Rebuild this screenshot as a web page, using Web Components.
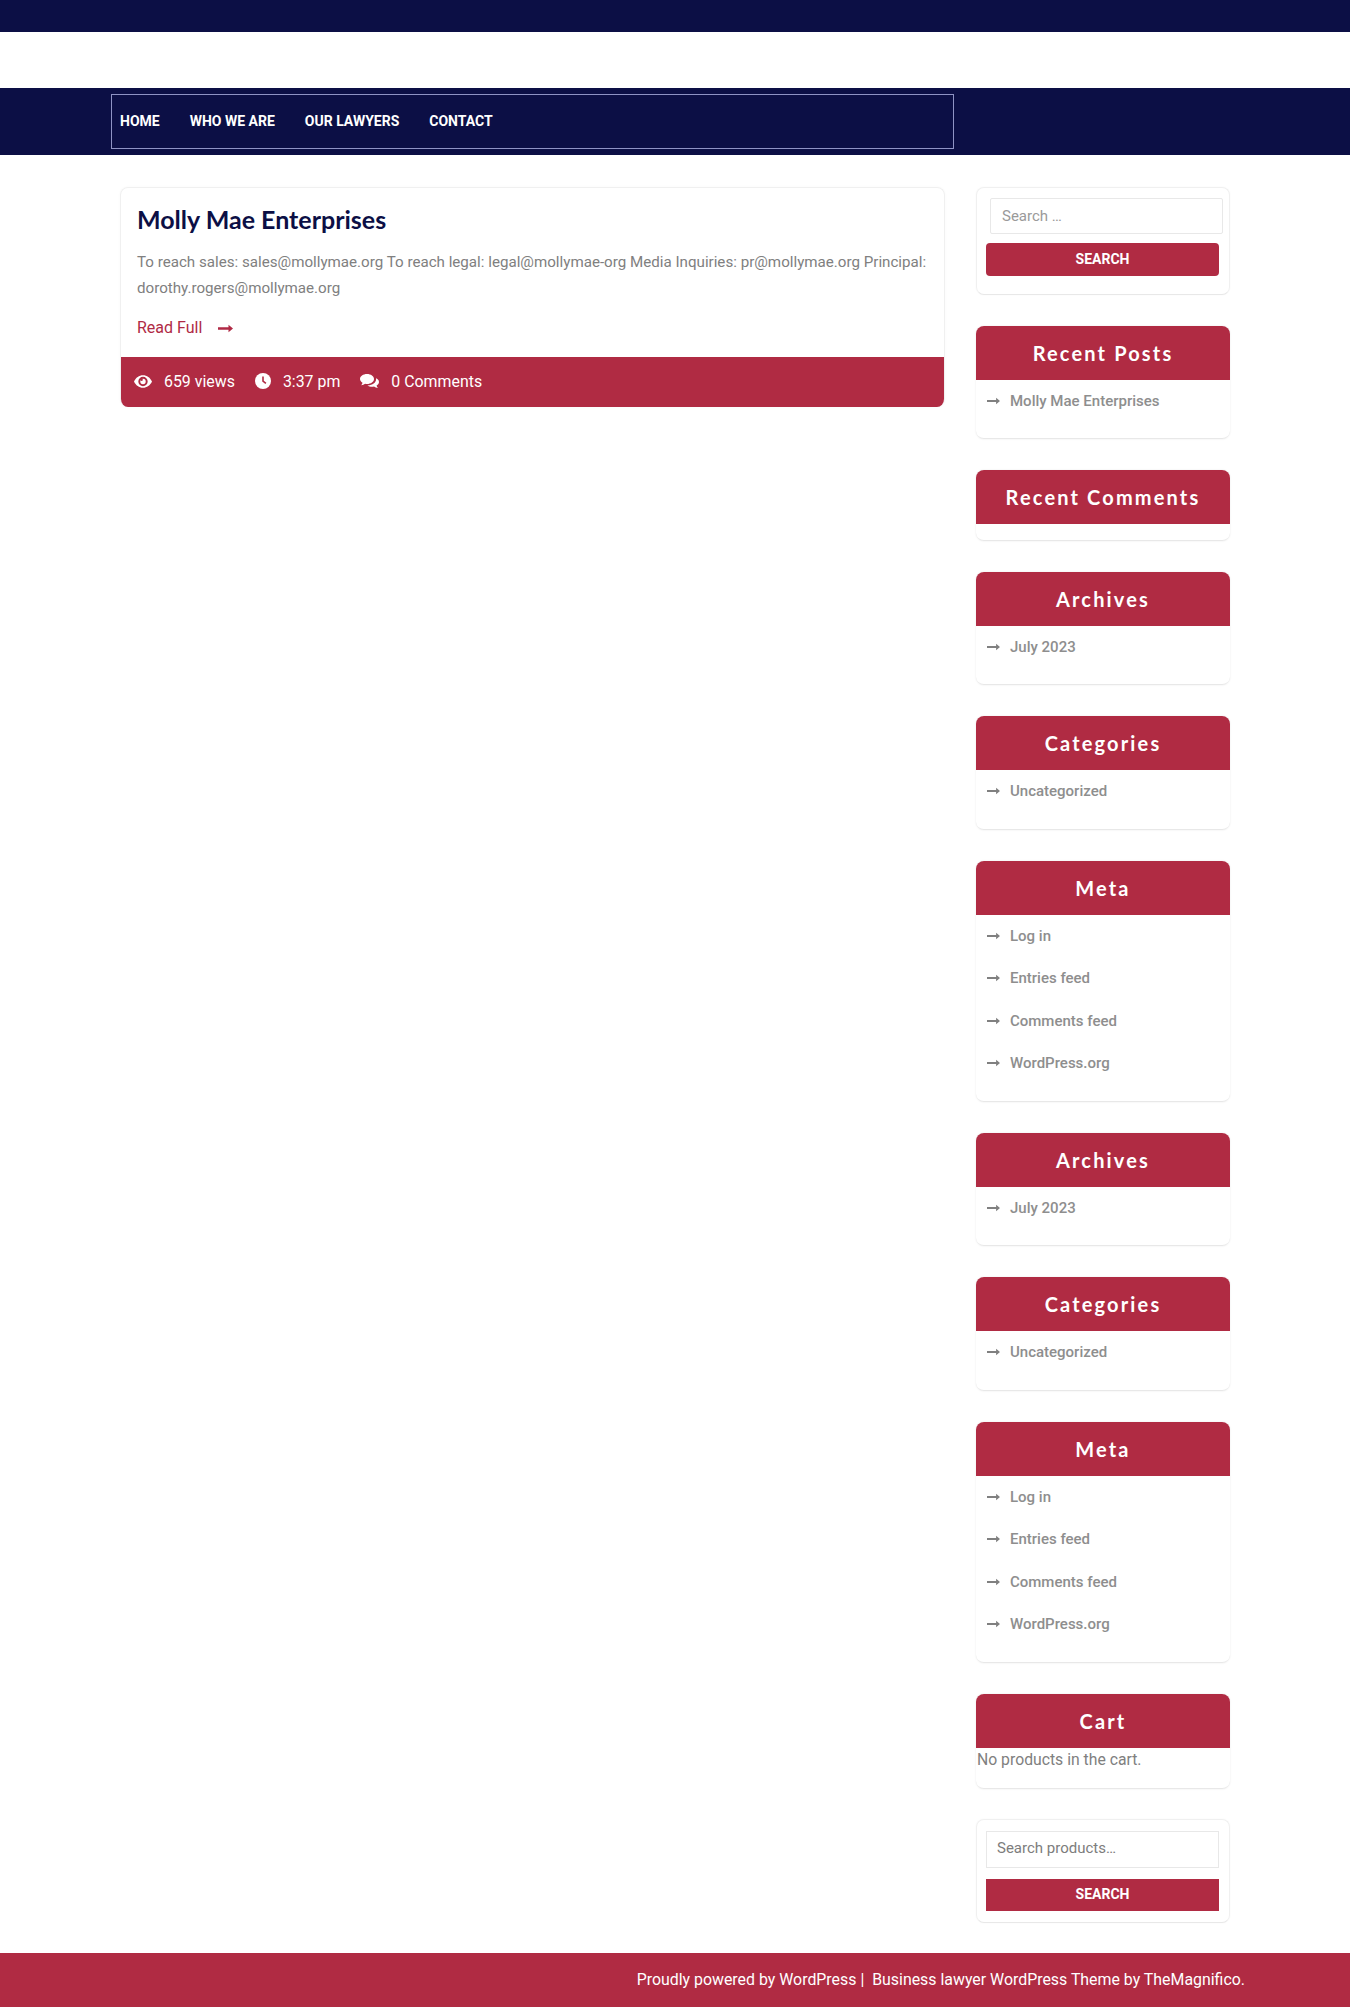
<!DOCTYPE html>
<html lang="en">
<head>
<meta charset="utf-8">
<title>Molly Mae Enterprises</title>
<style>
  html, body { margin: 0; padding: 0; background: #fff; font-family: Roboto, "Liberation Sans", sans-serif; }
</style>
</head>
<body>
<site-header></site-header>
<page-layout>
  <post-card slot="main"
    heading="Molly Mae Enterprises"
    views="659 views" time="3:37 pm" comments="0 Comments">
    To reach sales: sales@mollymae.org To reach legal: legal@mollymae-org Media Inquiries: pr@mollymae.org Principal: dorothy.rogers@mollymae.org
  </post-card>

  <search-widget slot="side"></search-widget>
  <side-widget slot="side" heading="Recent Posts"><link-list items="Molly Mae Enterprises"></link-list></side-widget>
  <side-widget slot="side" heading="Recent Comments" class="empty"></side-widget>
  <side-widget slot="side" heading="Archives"><link-list items="July 2023"></link-list></side-widget>
  <side-widget slot="side" heading="Categories"><link-list items="Uncategorized"></link-list></side-widget>
  <side-widget slot="side" heading="Meta"><link-list items="Log in|Entries feed|Comments feed|WordPress.org"></link-list></side-widget>
  <side-widget slot="side" heading="Archives"><link-list items="July 2023"></link-list></side-widget>
  <side-widget slot="side" heading="Categories"><link-list items="Uncategorized"></link-list></side-widget>
  <side-widget slot="side" heading="Meta"><link-list items="Log in|Entries feed|Comments feed|WordPress.org"></link-list></side-widget>
  <side-widget slot="side" heading="Cart"><cart-note>No products in the cart.</cart-note></side-widget>
  <product-search slot="side"></product-search>
</page-layout>
<site-footer></site-footer>

<script>
const ARROW = `<svg viewBox="0 0 14 8" width="13" height="8" fill="currentColor" aria-hidden="true"><path d="M0 2.800h9.800V.6L14 4 9.800 7.400V5.200H0z"/></svg>`;

class SiteHeader extends HTMLElement {
  constructor() {
    super();
    this.attachShadow({mode: 'open'});
  }
  connectedCallback() {
    this.shadowRoot.innerHTML = `
      <style>
        :host { display: block; }
        .top { height: 32px; background: #0c0f45; }
        .brand { height: 56px; background: #fff; }
        .bar { height: 67px; background: #0c0f45; padding: 6px 0 6px 111px; box-sizing: border-box; }
        nav {
          width: 843px; height: 55px; box-sizing: border-box;
          border: 1px solid #8f93c4;
          display: flex; align-items: center; gap: 30px; padding: 0 0 2px 8px;
        }
        a {
          color: #fff; text-decoration: none; text-transform: uppercase;
          font: 700 14px Roboto, sans-serif;
        }
      </style>
      <div class="top"></div>
      <div class="brand"></div>
      <div class="bar">
        <nav>
          <a href="#">Home</a>
          <a href="#">Who we are</a>
          <a href="#">Our Lawyers</a>
          <a href="#">Contact</a>
        </nav>
      </div>
    `;
  }
}

class PageLayout extends HTMLElement {
  constructor() {
    super();
    this.attachShadow({mode: 'open'});
  }
  connectedCallback() {
    this.shadowRoot.innerHTML = `
      <style>
        :host { display: block; }
        .wrap {
          display: grid; grid-template-columns: 825px 254px; column-gap: 31px;
          padding: 32px 0 30px 120px; align-items: start;
        }
        .side { display: flex; flex-direction: column; gap: 31px; }
      </style>
      <div class="wrap">
        <div><slot name="main"></slot></div>
        <div class="side"><slot name="side"></slot></div>
      </div>
    `;
  }
}

class PostCard extends HTMLElement {
  constructor() {
    super();
    this.attachShadow({mode: 'open'});
  }
  connectedCallback() {
    this.shadowRoot.innerHTML = `
      <style>
        :host {
          box-sizing: border-box; height: 220px;
          border: 1px solid #f0f0f0; border-bottom: 0; border-radius: 8px;
          box-shadow: 0 0 3px rgba(0, 0, 0, .03); overflow: hidden;
          display: flex; flex-direction: column;
        }
        .body { flex: 1; padding: 15px 16px 0; }
        h2 {
          margin: 0 0 14px; color: #0c0f45;
          font: 700 25px/32px Lato, sans-serif;
        }
        p { margin: 0 0 14px; color: #808080; font: 400 15.150px/26px Roboto, sans-serif; }
        .more {
          display: flex; align-items: center; gap: 16px;
          color: #b02a45; font: 400 16px/26px Roboto, sans-serif; text-decoration: none;
        }
        .more svg { width: 15px; height: 9px; }
        .meta {
          height: 50px; background: #b02b43; color: #fff;
          display: flex; align-items: center; padding: 0 0 2px 13px; box-sizing: border-box;
          font: 400 15.900px Roboto, sans-serif;
        }
        .meta span { display: flex; align-items: center; gap: 12px; margin-right: 20px; }
        .meta svg { display: block; }
      </style>
      <div class="body">
        <h2>${this.getAttribute('heading')}</h2>
        <p><slot></slot></p>
        <a class="more" href="#">Read Full ${ARROW}</a>
      </div>
      <div class="meta">
        <span>
          <svg viewBox="0 0 20 14" width="18" height="13" fill="#fff" aria-hidden="true">
            <path fill-rule="evenodd" d="M10 0c4.400 0 8 2.700 10 7-2 4.300-5.600 7-10 7S2 11.300 0 7c2-4.300 5.600-7 10-7zm0 1.800a5.200 5.200 0 1 0 0 10.400 5.200 5.200 0 0 0 0-10.400z"/>
            <path d="M10 4a3 3 0 1 1-3 3c0-.5.1-.9.3-1.300.2.500.7.800 1.200.800a1.400 1.400 0 0 0 .9-2.400C9.600 4 9.800 4 10 4z"/>
          </svg>${this.getAttribute('views')}
        </span>
        <span>
          <svg viewBox="0 0 16 16" width="16" height="16" aria-hidden="true">
            <circle cx="8" cy="8" r="8" fill="#fff"/>
            <path d="M7.200 3.400h1.600v4.300l2.600 2-1 1.200-3.200-2.500z" fill="#b02b43"/>
          </svg>${this.getAttribute('time')}
        </span>
        <span>
          <svg viewBox="0 0 19 15" width="19" height="15" fill="#fff" aria-hidden="true">
            <path d="M7 0c3.900 0 7 2.200 7 5s-3.100 5-7 5c-.7 0-1.300-.1-1.900-.2C4 10.700 2.700 11.100 1.200 11.200c.7-.8 1.200-1.700 1.300-2.500C1 7.800 0 6.500 0 5c0-2.800 3.100-5 7-5z"/>
            <path d="M15.100 3.700C17.400 4.400 19 6 19 7.900c0 1.400-.9 2.700-2.400 3.600.1.900.6 1.700 1.300 2.500-1.500-.1-2.800-.5-3.900-1.400-.6.100-1.300.2-1.900.2-1.900 0-3.500-.5-4.800-1.400 4.900.2 8.800-2.300 8.800-6.300 0-.3 0-.500 0-.8z"/>
          </svg>${this.getAttribute('comments')}
        </span>
      </div>
    `;
  }
}

class SideWidget extends HTMLElement {
  constructor() {
    super();
    this.attachShadow({mode: 'open'});
  }
  connectedCallback() {
    this.shadowRoot.innerHTML = `
      <style>
        :host {
          display: block; box-sizing: border-box;
          border-radius: 8px; border-bottom: 1px solid #e8e8e8;
          box-shadow: 0 0 2px rgba(0, 0, 0, .1);
        }
        h3 {
          margin: 0; height: 54px; background: #b02b43; color: #fff;
          border-radius: 8px 8px 0 0; text-align: center;
          font: 700 20px/54px Lato, sans-serif; letter-spacing: 2.150px;
        }
        .content { min-height: 15.600px; }
      </style>
      <h3>${this.getAttribute('heading')}</h3>
      <div class="content"><slot></slot></div>
    `;
  }
}

class LinkList extends HTMLElement {
  constructor() {
    super();
    this.attachShadow({mode: 'open'});
  }
  connectedCallback() {
    const rows = this.getAttribute('items').split('|')
      .map(t => `<li>${ARROW}<a href="#">${t}</a></li>`).join('');
    this.shadowRoot.innerHTML = `
      <style>
        :host { display: block; padding: 0 11px 15.800px; }
        ul { list-style: none; margin: 0; padding: 0; }
        li {
          display: flex; align-items: center; gap: 10px; height: 42.600px;
          box-sizing: border-box; padding-bottom: 1px;
          color: #808080; font: 500 15px Roboto, sans-serif;
        }
        a { color: #8e8e8e; text-decoration: none; }
      </style>
      <ul>${rows}</ul>
    `;
  }
}

class CartNote extends HTMLElement {
  constructor() {
    super();
    this.attachShadow({mode: 'open'}).innerHTML = `
      <style>
        :host { display: block; height: 40px; padding-left: 1px; box-sizing: border-box; color: #808080; font: 400 15.750px/24px Roboto, sans-serif; }
      </style>
      <slot></slot>
    `;
  }
}

class SearchWidget extends HTMLElement {
  constructor() {
    super();
    this.attachShadow({mode: 'open'});
  }
  connectedCallback() {
    this.shadowRoot.innerHTML = `
      <style>
        :host {
          display: block; box-sizing: border-box; height: 108px; padding: 10px 10px 0;
          border-radius: 8px; border: 1px solid #f0f0f0; border-bottom-color: #e8e8e8;
          box-shadow: 0 0 2px rgba(0, 0, 0, .04);
        }
        input {
          display: block; box-sizing: border-box; width: 233px; height: 36px; margin: 0 0 9px 3px;
          padding: 0 11px; border: 1px solid #e8e8e8; border-radius: 2px; background: #fff;
          font: 400 15px Roboto, sans-serif; color: #777; outline: 0;
        }
        input::placeholder { color: #9a9a9a; }
        button {
          display: block; width: 233px; height: 33px; border: 0; border-radius: 4px; margin-left: -1px; padding: 0 0 1px;
          background: #b02b43; color: #fff; text-transform: uppercase;
          font: 700 14px Roboto, sans-serif;
        }
      </style>
      <input type="search" placeholder="Search …">
      <button>Search</button>
    `;
  }
}

class ProductSearch extends HTMLElement {
  constructor() {
    super();
    this.attachShadow({mode: 'open'});
  }
  connectedCallback() {
    this.shadowRoot.innerHTML = `
      <style>
        :host {
          display: block; box-sizing: border-box; height: 104px; margin-top: -1px; padding: 11px 10px 0;
          border-radius: 8px; border: 1px solid #f0f0f0; border-bottom-color: #e8e8e8;
          box-shadow: 0 0 2px rgba(0, 0, 0, .04);
        }
        input {
          display: block; box-sizing: border-box; width: 233px; height: 37px; margin: 0 0 11px -1px;
          padding: 0 10px 2px; border: 1px solid #e8e8e8; background: #fff;
          font: 400 15px Roboto, sans-serif; color: #777; outline: 0;
        }
        input::placeholder { color: #7d7d7d; }
        button {
          display: block; width: 233px; height: 32px; border: 0; margin-left: -1px; padding: 0 0 1px;
          background: #b02b43; color: #fff; text-transform: uppercase;
          font: 700 14px Roboto, sans-serif;
        }
      </style>
      <input type="search" placeholder="Search products…">
      <button>Search</button>
    `;
  }
}

class SiteFooter extends HTMLElement {
  constructor() {
    super();
    this.attachShadow({mode: 'open'});
  }
  connectedCallback() {
    this.shadowRoot.innerHTML = `
      <style>
        :host {
          display: flex; justify-content: flex-end; align-items: center; box-sizing: border-box;
          height: 54px; padding: 0 105px 1px 0; background: #b02b43; color: #fff;
          font: 400 15.900px Roboto, sans-serif;
        }
        a { color: inherit; text-decoration: none; }
      </style>
      <div><a href="#">Proudly powered by WordPress</a> |&nbsp; <a href="#">Business lawyer WordPress Theme</a> by <a href="#">TheMagnifico</a>.</div>
    `;
  }
}

customElements.define('site-header', SiteHeader);
customElements.define('page-layout', PageLayout);
customElements.define('post-card', PostCard);
customElements.define('side-widget', SideWidget);
customElements.define('link-list', LinkList);
customElements.define('cart-note', CartNote);
customElements.define('search-widget', SearchWidget);
customElements.define('product-search', ProductSearch);
customElements.define('site-footer', SiteFooter);
</script>
</body>
</html>
